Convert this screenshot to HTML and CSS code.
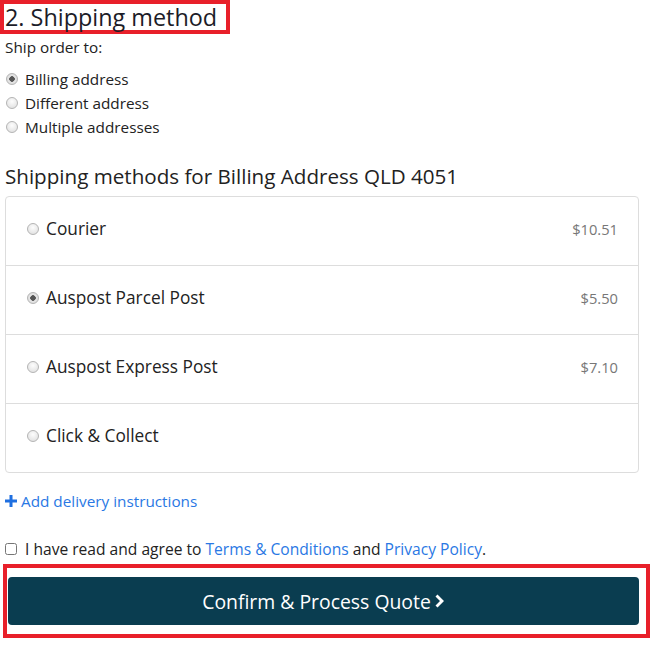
FILE: index.html
```html
<!DOCTYPE html>
<html lang="en">
<head>
    <meta charset="UTF-8">
    <meta name="viewport" content="width=device-width, initial-scale=1.0">
    <title>Shipping method</title>
    <link rel="stylesheet" href="styles.css">
</head>
<body>
    <h2 class="step-title">2. Shipping method</h2>
    <div class="checkout">
        <p class="ship-to">Ship order to:</p>
        <ul class="address-options">
            <li><label><input type="radio" name="shipto" checked> Billing address</label></li>
            <li><label><input type="radio" name="shipto"> Different address</label></li>
            <li><label><input type="radio" name="shipto"> Multiple addresses</label></li>
        </ul>

        <h3 class="methods-title">Shipping methods for Billing Address QLD 4051</h3>
        <div class="methods">
            <label class="method">
                <span class="method-name"><input type="radio" name="method"> Courier</span>
                <span class="price">$10.51</span>
            </label>
            <label class="method">
                <span class="method-name"><input type="radio" name="method" checked> Auspost Parcel Post</span>
                <span class="price">$5.50</span>
            </label>
            <label class="method">
                <span class="method-name"><input type="radio" name="method"> Auspost Express Post</span>
                <span class="price">$7.10</span>
            </label>
            <label class="method">
                <span class="method-name"><input type="radio" name="method"> Click &amp; Collect</span>
            </label>
        </div>

        <a class="add-link" href="#">
            <svg class="plus" viewBox="0 0 12 12" width="12" height="12"><path d="M4.5 0h3v4.5H12v3H7.5V12h-3V7.5H0v-3h4.5z"/></svg>
            Add delivery instructions
        </a>

        <label class="agree">
            <input type="checkbox">
            <span>I have read and agree to <a href="#">Terms &amp; Conditions</a> and <a href="#">Privacy Policy</a>.</span>
        </label>

        <div class="confirm-box">
            <button class="confirm" type="button">Confirm &amp; Process Quote
                <svg class="chevron" viewBox="0 0 10 14" width="10" height="14"><path d="M2.5 0.5L9 7l-6.5 6.5L0.5 11.5 5 7 0.5 2.5z"/></svg>
            </button>
        </div>
    </div>
</body>
</html>
```

FILE: styles.css
```css
body {
    margin: 0;
    font-family: "Open Sans", "Noto Sans", sans-serif;
    color: #222;
    background: #fff;
}

.step-title {
    display: inline-block;
    margin: 0;
    padding: 0 9px 0 1px;
    border: 4px solid #e8202a;
    font-size: 23.4px;
    font-weight: 400;
    line-height: 26px;
    color: #1c1c28;
}

.checkout {
    width: 634px;
    padding-left: 5px;
}

.ship-to {
    margin: 3px 0 10px;
    font-size: 15.3px;
    line-height: 20px;
}

.address-options {
    list-style: none;
    margin: 0;
    padding: 0;
}
.address-options li {
    font-size: 15.3px;
    line-height: 24px;
}
.address-options label {
    display: flex;
    align-items: center;
    gap: 7px;
}

input[type="radio"] {
    appearance: none;
    flex: none;
    width: 12px;
    height: 12px;
    margin: 0 0 0 1px;
    border: 1px solid #b4b4b4;
    border-radius: 50%;
    background: radial-gradient(circle at 50% 35%, #fdfdfd 0%, #dcdcdc 100%);
}
input[type="radio"]:checked {
    background: radial-gradient(circle, #555 0, #555 2.5px, #e6e6e6 3px, #d8d8d8 100%);
}

.methods-title {
    margin: 23px 0 6px;
    font-size: 20.6px;
    font-weight: 400;
    line-height: 28px;
}

.methods {
    border: 1px solid #ddd;
    border-radius: 4px;
}
.method {
    display: flex;
    justify-content: space-between;
    align-items: center;
    box-sizing: border-box;
    height: 69px;
    padding: 0 20px 5px;
    border-top: 1px solid #ddd;
}
.method:first-child {
    height: 68px;
    border-top: none;
}
.method-name {
    display: flex;
    align-items: center;
    gap: 7px;
    font-size: 17.3px;
}
.price {
    color: #777;
    font-size: 14.7px;
}

a {
    color: #2a78e4;
    text-decoration: none;
}

.add-link {
    display: flex;
    align-items: center;
    gap: 4px;
    margin: 18px 0 0;
    font-size: 15.3px;
    line-height: 20px;
}
.plus {
    flex: none;
    fill: #1f6fe0;
}

.agree {
    display: flex;
    align-items: center;
    gap: 8px;
    margin-top: 28px;
    font-size: 15.6px;
    line-height: 20px;
}
.agree input {
    width: 12px;
    height: 12px;
    margin: 0;
}

.confirm-box {
    margin: 5px -11px 0 -2px;
    padding: 9px 6px 9px 1px;
    border: 4px solid #e8202a;
}
.confirm {
    display: flex;
    align-items: center;
    justify-content: center;
    gap: 4px;
    width: 631px;
    height: 48px;
    border: none;
    border-radius: 4px;
    background: #0a3d50;
    color: #fff;
    font-family: "Open Sans", "Noto Sans", sans-serif;
    font-size: 19.4px;
}
.chevron {
    fill: #fff;
}
```
